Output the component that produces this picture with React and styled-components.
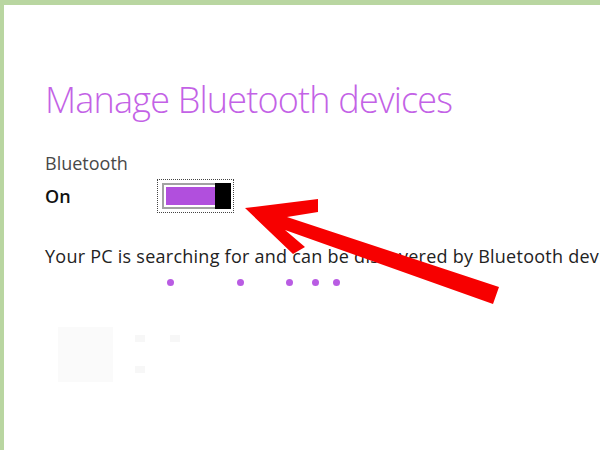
import React from 'react';
import styled, { createGlobalStyle } from 'styled-components';

const GlobalStyle = createGlobalStyle`
    html, body {
        margin : 0;
        padding : 0;
        background : #ffffff;
    }
`

const dots = [121.5, 63, 42, 19, 14];

const App = () => {
    return (
        <Frame>
            <GlobalStyle />
            <Page>
                <Title>Manage Bluetooth devices</Title>
                <Label>Bluetooth</Label>
                <SwitchRow>
                    <State>On</State>
                    <FocusBox>
                        <Track>
                            <Fill />
                            <Thumb />
                        </Track>
                    </FocusBox>
                </SwitchRow>
                <Status>Your PC is searching for and can be discovered by Bluetooth devices.</Status>
                <Progress>
                    {dots.map((g, i) => <Dot key={i} gap={g} />)}
                </Progress>
                <DeviceRow>
                    <DeviceTile />
                    <DeviceText>
                        <GhostLine>
                            <Ghost />
                            <Ghost />
                        </GhostLine>
                        <GhostLine>
                            <Ghost />
                        </GhostLine>
                    </DeviceText>
                </DeviceRow>
            </Page>
            <Arrow viewBox="0 0 600 450">
                <polygon
                    points="245,208 318,199 318,212 287,217 499,287 493,304 285,230 305,247 293,254"
                    fill="#f70000"
                />
            </Arrow>
        </Frame>
    )
}

const Frame = styled.div`
    position : relative;
    width : 600px;
    height : 450px;
    overflow : hidden;
`

const Page = styled.div`
    box-sizing : border-box;
    width : 600px;
    height : 450px;
    border-top : 5px solid #b9d6a1;
    border-left : 4px solid #b9d6a1;
    padding : 0 0 0 41px;
    font-family : 'Open Sans', 'Noto Sans', sans-serif;
    color : #222;
    overflow : hidden;
`

const Title = styled.h1`
    margin : 73px 0 0 0;
    font-size : 36px;
    line-height : 44px;
    font-weight : 300;
    letter-spacing : -0.8px;
    color : #c362e6;
    white-space : nowrap;
`

const Label = styled.div`
    margin : 29px 0 0 0;
    font-size : 18px;
    line-height : 24px;
    color : #484848;
`

const SwitchRow = styled.div`
    margin : 4px 0 0 0;
    display : flex;
    align-items : center;
`

const State = styled.div`
    width : 112px;
    font-size : 18px;
    line-height : 24px;
    font-weight : 600;
    color : #111;
`

const FocusBox = styled.div`
    box-sizing : border-box;
    width : 77px;
    height : 34px;
    border : 1px dotted #444;
    padding : 3px 2px 3px 4px;
`

const Track = styled.div`
    box-sizing : border-box;
    height : 26px;
    border : 2px solid #a2a2a2;
    padding : 2px 0 2px 2px;
    display : flex;
`

const Fill = styled.div`
    flex : 1;
    background : #b14fdd;
`

const Thumb = styled.div`
    width : 16px;
    margin : -4px -2px -4px 0;
    background : #000;
`

const Status = styled.div`
    margin : 31px 0 0 0;
    font-size : 18px;
    line-height : 24px;
    letter-spacing : 0.25px;
    color : #222;
    white-space : nowrap;
`

const Progress = styled.div`
    margin : 11px 0 0 0;
    display : flex;
    height : 7px;
`

const Dot = styled.span`
    width : 7px;
    height : 7px;
    border-radius : 50%;
    background : #b95ce3;
    margin-left : ${props => props.gap}px;
`

const DeviceRow = styled.div`
    margin : 41px 0 0 13px;
    display : flex;
    gap : 22px;
`

const DeviceTile = styled.div`
    width : 55px;
    height : 55px;
    background : #fafafa;
`

const DeviceText = styled.div`
    display : flex;
    flex-direction : column;
    gap : 24px;
    padding : 8px 0 0 0;
`

const GhostLine = styled.div`
    display : flex;
    gap : 25px;
`

const Ghost = styled.div`
    width : 10px;
    height : 7px;
    background : #f7f7f7;
`

const Arrow = styled.svg`
    position : absolute;
    left : 0;
    top : 0;
    width : 600px;
    height : 450px;
    pointer-events : none;
`

export default App;
